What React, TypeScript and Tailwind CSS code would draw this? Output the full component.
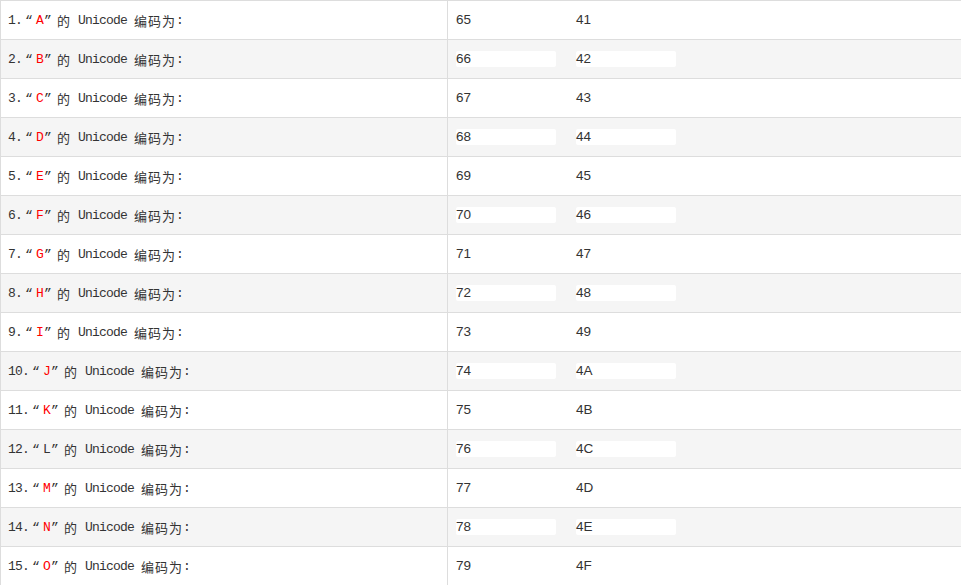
const LETTERS = "ABCDEFGHIJKLMNO".split("");

// every letter is red except L, as in the reference
const RED = new Set(["A", "B", "C", "D", "E", "F", "G", "H", "I", "J", "K", "M", "N", "O"]);

function LabelCell({ index, letter }: { index: number; letter: string }) {
  return (
    <div className="flex w-[447px] shrink-0 items-center border-r border-[#dddddd] pt-[2px] pl-[7px] [font-family:'Liberation_Mono','Noto_Sans_CJK_SC',monospace] text-[13px] tracking-[-0.8px] text-[#333333]">
      <span>{index + 1}.</span>
      <span className="inline-block w-[14px] pl-[3px] tracking-normal">“</span>
      <span className={RED.has(letter) ? "text-[#ff0000]" : ""}>{letter}</span>
      <span className="inline-block w-[14px] pl-[1px] tracking-normal">”</span>
      <span className="[font-family:'Noto_Sans_CJK_SC',sans-serif] text-[13px] tracking-[1px]">的</span>
      <span className="whitespace-pre"> Unicode </span>
      <span className="[font-family:'Noto_Sans_CJK_SC',sans-serif] text-[13px] tracking-[1px]">编码为</span>
      <span>:</span>
    </div>
  );
}

function ValueCell({ dec, hex }: { dec: string; hex: string }) {
  return (
    <div className="flex flex-1 items-center gap-[20px] pl-[8px] [font-family:'Liberation_Sans',Arial,sans-serif] text-[13.5px] text-[#333333]">
      <div className="flex h-[16px] w-[100px] items-center rounded-[2px] bg-white">{dec}</div>
      <div className="flex h-[16px] w-[100px] items-center rounded-[2px] bg-white">{hex}</div>
    </div>
  );
}

export default function App() {
  return (
    <div className="h-[585px] w-[961px] overflow-hidden bg-white">
      {LETTERS.map((letter, i) => {
        const code = 65 + i;
        return (
          <div
            key={letter}
            className={
              "flex h-[39px] border-l border-t border-[#dddddd] " +
              (i % 2 === 1 ? "bg-[#f5f5f5]" : "bg-white")
            }
          >
            <LabelCell index={i} letter={letter} />
            <ValueCell dec={String(code)} hex={code.toString(16).toUpperCase()} />
          </div>
        );
      })}
    </div>
  );
}
